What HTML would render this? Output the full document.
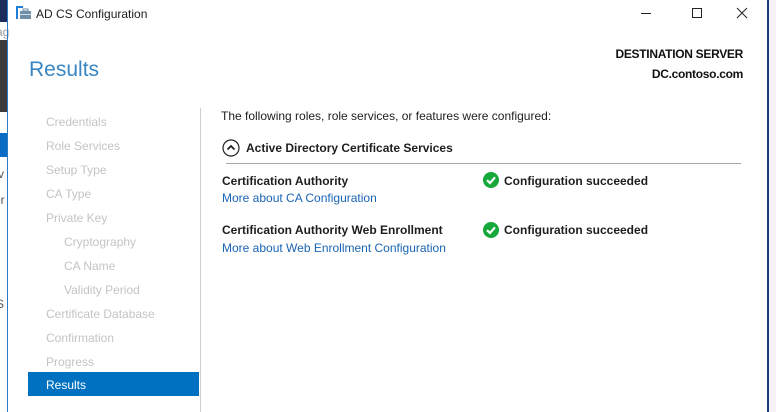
<!DOCTYPE html>
<html><head><meta charset="utf-8"><style>
*{margin:0;padding:0;box-sizing:border-box}
body{width:776px;height:412px;overflow:hidden;position:relative;background:#fff;font-family:"Segoe UI","Liberation Sans",sans-serif;font-size:12px;color:#1e1e1e}
.a{position:absolute;white-space:nowrap;line-height:16px}
.nav{position:absolute;left:46px;color:#c4c4c4;font-size:12px;line-height:16px}
.sub{left:64px}
.b{font-weight:bold}
.lk{color:#1a64b4}
</style></head><body>
<div style="position:absolute;left:0;top:0;width:7px;height:22px;background:#1b2e5c"></div>
<div style="position:absolute;left:0;top:40px;width:7px;height:72px;background:#3b3b3b"></div>
<div style="position:absolute;left:0;top:133px;width:7px;height:24px;background:#0a6cc4"></div>
<div class="a" style="left:-4px;top:24px;color:#999">ag</div>
<div class="a" style="left:-6px;top:166px;color:#555">rv</div>
<div class="a" style="left:-6px;top:192px;color:#555">er</div>
<div class="a" style="left:-4px;top:296px;color:#555">S</div>
<div style="position:absolute;left:7px;top:0;width:1px;height:412px;background:#2b7bc4"></div>
<div style="position:absolute;left:767px;top:0;width:9px;height:412px;background:#f6f2f8"></div>
<div style="position:absolute;left:767px;top:0;width:2px;height:412px;background:#1b3c78"></div>

<svg style="position:absolute;left:16px;top:6px" width="16" height="14" viewBox="0 0 16 14">
<rect x="0" y="0" width="7" height="2" fill="#1c7ed6"/><rect x="0" y="0" width="2" height="13" fill="#1c7ed6"/>
<rect x="4" y="5" width="11" height="8" fill="#6f8fa8"/><rect x="7" y="3" width="5" height="2" fill="none" stroke="#6f8fa8" stroke-width="1"/><rect x="4" y="8" width="11" height="1" fill="#cfdbe5"/></svg>
<div class="a" style="left:36px;top:6px;font-size:12px">AD CS Configuration</div>
<svg style="position:absolute;left:640px;top:6px" width="110" height="16" viewBox="0 0 110 16">
<line x1="1" y1="7.5" x2="11" y2="7.5" stroke="#222"/>
<rect x="52.5" y="2.5" width="9" height="9" fill="none" stroke="#222"/>
<path d="M97 2 L107 12 M107 2 L97 12" stroke="#222"/></svg>

<div class="a" style="left:29px;top:55px;font-size:21px;line-height:30px;color:#3a86c2;font-weight:300">Results</div>
<div class="a" style="right:33px;top:46px;text-align:right;font-size:12px;color:#111;font-weight:bold;letter-spacing:-0.3px">DESTINATION SERVER</div>
<div class="a" style="right:33px;top:66px;text-align:right;font-size:12px;color:#111;font-weight:bold;letter-spacing:-0.3px">DC.contoso.com</div>

<div class="nav" style="top:114px">Credentials</div>
<div class="nav" style="top:138px">Role Services</div>
<div class="nav" style="top:162px">Setup Type</div>
<div class="nav" style="top:186px">CA Type</div>
<div class="nav" style="top:210px">Private Key</div>
<div class="nav sub" style="top:234px">Cryptography</div>
<div class="nav sub" style="top:258px">CA Name</div>
<div class="nav sub" style="top:282px">Validity Period</div>
<div class="nav" style="top:306px">Certificate Database</div>
<div class="nav" style="top:330px">Confirmation</div>
<div class="nav" style="top:354px">Progress</div>
<div style="position:absolute;left:28px;top:372px;width:171px;height:24px;background:#0071c1"></div>
<div class="nav" style="top:377px;color:#fff">Results</div>
<div style="position:absolute;left:200px;top:108px;width:1px;height:304px;background:#cfcfcf"></div>

<div class="a" style="left:221px;top:108px">The following roles, role services, or features were configured:</div>
<svg style="position:absolute;left:222px;top:139px" width="18" height="18" viewBox="0 0 18 18"><circle cx="9" cy="9" r="8" fill="none" stroke="#222" stroke-width="1.2"/><path d="M5.5 10.5 L9 7 L12.5 10.5" fill="none" stroke="#222" stroke-width="1.8"/></svg>
<div class="a b" style="left:246px;top:140px">Active Directory Certificate Services</div>
<div style="position:absolute;left:226px;top:163px;width:515px;height:1px;background:#a8a8a8"></div>

<div class="a b" style="left:222px;top:173px">Certification Authority</div>
<div class="a lk" style="left:222px;top:190px">More about CA Configuration</div>
<div class="a b" style="left:222px;top:222px">Certification Authority Web Enrollment</div>
<div class="a lk" style="left:222px;top:240px">More about Web Enrollment Configuration</div>

<svg style="position:absolute;left:483px;top:172px" width="16" height="16" viewBox="0 0 16 16"><circle cx="8" cy="8" r="8" fill="#16a83a"/><path d="M4 8.2 L7 11 L12 5.3" fill="none" stroke="#fff" stroke-width="2.2"/></svg>
<div class="a b" style="left:504px;top:173px">Configuration succeeded</div>
<svg style="position:absolute;left:483px;top:222px" width="16" height="16" viewBox="0 0 16 16"><circle cx="8" cy="8" r="8" fill="#16a83a"/><path d="M4 8.2 L7 11 L12 5.3" fill="none" stroke="#fff" stroke-width="2.2"/></svg>
<div class="a b" style="left:504px;top:222px">Configuration succeeded</div>
</body></html>
